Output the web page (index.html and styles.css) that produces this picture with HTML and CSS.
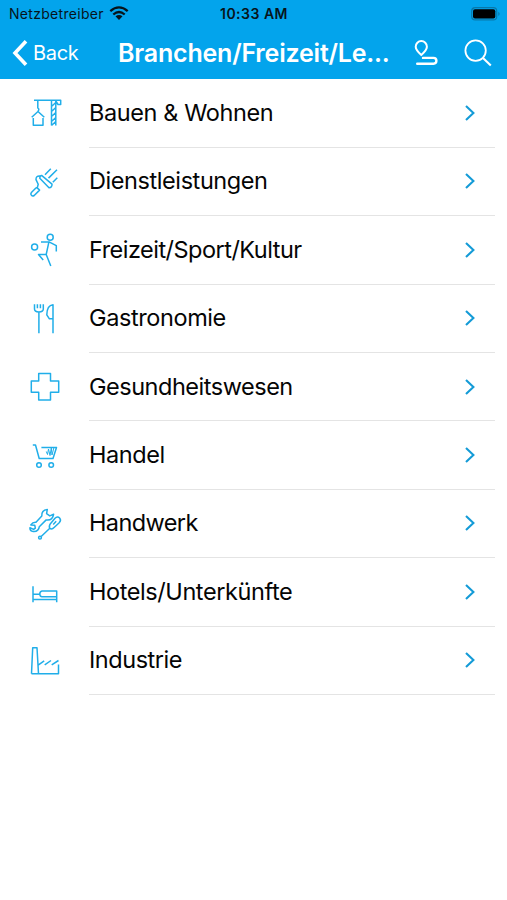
FILE: index.html
```
<!DOCTYPE html>
<html lang="de">
<head>
<meta charset="utf-8">
<title>Branchen</title>
<link rel="stylesheet" href="styles.css">
</head>
<body>
<header class="header">
  <div class="status">
    <div class="carrier"><span>Netzbetreiber</span>
      <svg class="wifi" width="20" height="15" viewBox="0 0 20 15"><g fill="none" stroke="#07141b" stroke-width="2.3"><path d="M1.3 5.2Q10-2.4 18.7 5.2"/><path d="M4.3 8.5Q10 3.5 15.7 8.5"/></g><path d="M6.5 10.3Q10 7.5 13.5 10.3L10 14Z" fill="#07141b"/></svg>
    </div>
    <time class="time">10:33 AM</time>
    <svg class="battery" width="30" height="14" viewBox="0 0 30 14"><rect x=".7" y=".7" width="25" height="12.2" rx="3.5" fill="none" stroke="#0878aa" stroke-width="1.2"/><rect x="2" y="2.2" width="22.3" height="9.2" rx="2" fill="#000"/><path d="M27.3 4.7Q30 6.8 27.3 8.9Z" fill="#0878aa"/></svg>
  </div>
  <nav class="nav">
    <a class="back"><svg width="16" height="28" viewBox="0 0 16 28"><path d="M14 2.2 3 14 14 25.8" fill="none" stroke="#fff" stroke-width="3.6"/></svg><span>Back</span></a>
    <h1 class="title">Branchen/Freizeit/Le...</h1>
    <svg class="route" width="26" height="28" viewBox="0 0 26 28" fill="none" stroke="#fff" stroke-width="2"><path d="M7.3 15.9Q1.7 11 1.7 7.7a5.6 5.6 0 0 1 11.2 0Q12.9 11 7.3 15.9Z"/><path d="M9 18.9H19.5a2.9 2.9 0 0 1 0 5.8H3.2" stroke-width="2.4" stroke-linecap="round"/></svg>
    <svg class="search" width="28" height="28" viewBox="0 0 28 28" fill="none" stroke="#fff" stroke-width="1.8"><circle cx="11.6" cy="11.6" r="10.2"/><path d="m19 19 7.8 7.5" stroke-width="2.1"/></svg>
  </nav>
</header>
<main class="list">
  <a class="row"><svg class="icon" viewBox="0 -1.5 50 50"><path d="M14 10.7H40.7V15H38L35.5 11M17.8 11v7.4q2 1.5 0 3.6M11.7 27.7 18 22l6.3 5.7M13.3 28.5V35.8H23V28.5M31.5 10.7V36M35.8 10.7V36M31.5 17l4.3-4M31.5 22l4.3-4M31.5 27l4.3-4M31.5 32l4.3-4M31.5 36l4.3-4"/></svg><span class="cell"><span class="label l1">Bauen &amp; Wohnen</span><svg class="chevron" viewBox="0 0 12 18"><path d="m2 2 7.4 7L2 16"/></svg></span></a>
  <a class="row"><svg class="icon" viewBox="0 -1.1 50 50"><path d="M21.6 17.3 32 26Q32.2 29.5 29 29.6L19.8 20.2Q19.8 17.5 21.6 17.3ZM20 18Q15.8 17.6 16 21.5L18.2 26.2 17.2 30M17.2 29.8 19.6 32 14.2 37.4q-1.6 1-2.8-.2t0-2.8l4-4.1q1-1 1.8-.5M25 16.7 30.8 10.6M28.5 20 37 11.6M32.8 24.2 37.3 19.7"/></svg><span class="cell"><span class="label l2">Dienstleistungen</span><svg class="chevron" viewBox="0 0 12 18"><path d="m2 2 7.4 7L2 16"/></svg></span></a>
  <a class="row"><svg class="icon" viewBox="0 -.7 50 50"><circle cx="30.2" cy="11.5" r="3"/><circle cx="14.6" cy="21.3" r="3"/><path d="M21 16.4H29.5L36.3 20V25.7M28.8 16.6 26.2 28.8H18.5L23.2 34.4M26.2 28.8 30.8 40.3"/></svg><span class="cell"><span class="label l3">Freizeit/Sport/Kultur</span><svg class="chevron" viewBox="0 0 12 18"><path d="m2 2 7.4 7L2 16"/></svg></span></a>
  <a class="row"><svg class="icon" viewBox="0 -.3 50 50"><path d="M14.5 10v4.7q0 2.9 4.4 2.9t4.4-2.9V10M17.4 10v4M20.4 10v4M18.9 17.6V39M33 39V10.5Q27 11 26.8 20.5L29.4 24.5H33"/></svg><span class="cell"><span class="label l4">Gastronomie</span><svg class="chevron" viewBox="0 0 12 18"><path d="m2 2 7.4 7L2 16"/></svg></span></a>
  <a class="row"><svg class="icon" viewBox="0 .1 50 50"><path d="M18.7 11.5H30.5V19H38.7V30.3H30.5V38.2H18.7V30.3H11.3V19H18.7Z"/></svg><span class="cell"><span class="label l5">Gesundheitswesen</span><svg class="chevron" viewBox="0 0 12 18"><path d="m2 2 7.4 7L2 16"/></svg></span></a>
  <a class="row"><svg class="icon" viewBox="0 0 50 50"><path d="M12.8 15H15.5L19.2 28.5H33L36.5 17.5H21.4"/><path class="fine" d="M26.3 21.5l1.2 3 1-5.5 1.5 6.5 1.3-7.5.7 7 1.8-7"/><circle cx="19" cy="35" r="2.3"/><circle cx="31.2" cy="35" r="2.3"/></svg><span class="cell"><span class="label l6">Handel</span><svg class="chevron" viewBox="0 0 12 18"><path d="m2 2 7.4 7L2 16"/></svg></span></a>
  <a class="row"><svg class="icon" viewBox="0 -1.1 50 50"><path d="M27.3 9.3Q21.3 9.8 21.8 16L16 22.2Q12.8 21.9 10.8 24.8L14.8 25.2 15.3 28 13.6 29.3 9.9 27.6Q9.8 31 13.2 31.4 18.7 31.8 19.3 26.6L26.2 19.8Q32.5 20.8 33.6 14.2L29.8 15.8 26.6 13.6ZM21.2 36.4 29.8 28.2M30.4 23.6 35 18.2Q37.5 15.6 39.6 17.8 41.6 20 39.2 22.6L34.4 27.2Q31.8 29.8 29.8 28.2 28.6 26.4 30.4 23.6ZM33.2 24.4 36.2 21.2"/><circle cx="20" cy="37.6" r="1.4"/></svg><span class="cell"><span class="label l7">Handwerk</span><svg class="chevron" viewBox="0 0 12 18"><path d="m2 2 7.4 7L2 16"/></svg></span></a>
  <a class="row"><svg class="icon" viewBox="0 -.7 50 50"><path d="M13 18.5V34.5M13 26.5H20M13 31.7H36.7V34.5M36.7 31.7V23.3H22Q19.8 23.8 19.8 26.2T22 29H36.5"/></svg><span class="cell"><span class="label l8">Hotels/Unterkünfte</span><svg class="chevron" viewBox="0 0 12 18"><path d="m2 2 7.4 7L2 16"/></svg></span></a>
  <a class="row"><svg class="icon" viewBox="0 -.3 50 50"><path d="M11.5 37.5 12.7 11.5H17L18.5 37.5M11.5 37.5H38.5V28.3M18.5 28.5 24.2 24.6M24.7 28.5 31 24.2M31.7 28.5 38.5 24.2"/></svg><span class="cell"><span class="label l9">Industrie</span><svg class="chevron" viewBox="0 0 12 18"><path d="m2 2 7.4 7L2 16"/></svg></span></a>
</main>
</body>
</html>
```
FILE: styles.css
```
* { box-sizing: border-box; }
body { margin: 0; background: #fff; color: #050505; font-family: Inter, "Liberation Sans", sans-serif; }
.header { height: 79px; background: #03a4ec; }
.status { height: 27px; display: grid; grid-template-columns: 1fr auto 1fr; align-items: center; padding: 0 6px 0 9px; color: #07141b; font-size: 14px; }
.carrier { display: flex; align-items: center; gap: 5px; letter-spacing: .3px; }
.wifi { margin-top: -1px; }
.time { font-weight: 600; letter-spacing: .5px; margin-left: -2px; }
.battery { justify-self: end; }
.nav { height: 52px; display: flex; align-items: center; color: #fff; padding-left: 12px; }
.back { display: flex; align-items: center; gap: 5px; width: 106px; font-size: 20px; letter-spacing: -.3px; }
.back svg { flex: none; }
.title { margin: 0; width: 296px; font-size: 25px; line-height: 32px; font-weight: 600; letter-spacing: -.2px; white-space: nowrap; }
.route { flex: none; }
.search { flex: none; margin-left: 24px; }
.list { display: grid; grid-auto-rows: 68.4px; padding-top: .4px; }
.row { display: flex; align-items: stretch; padding: 0 12px 0 20px; }
.icon { width: 50px; height: 50px; margin: 9.1px 19px 0 0; flex: none; fill: none; stroke: #20aee9; stroke-width: 1.5; stroke-linejoin: round; }
.fine { stroke-width: 1; }
.cell { flex: 1; display: flex; align-items: center; justify-content: space-between; border-bottom: 1.4px solid #e4e4e4; padding-right: 19px; }
.label { font-size: 23.5px; line-height: 30px; white-space: nowrap; }
.l1 { letter-spacing: -.4px; }
.l2 { letter-spacing: -.42px; }
.l3 { letter-spacing: -.52px; }
.l4 { letter-spacing: -.4px; }
.l5 { letter-spacing: -.48px; }
.l6 { letter-spacing: -.45px; }
.l7 { letter-spacing: -.6px; }
.l8 { letter-spacing: -.42px; }
.l9 { letter-spacing: -.46px; }
.chevron { width: 12px; height: 18px; fill: none; stroke: #149bd7; stroke-width: 2.1; }
```
